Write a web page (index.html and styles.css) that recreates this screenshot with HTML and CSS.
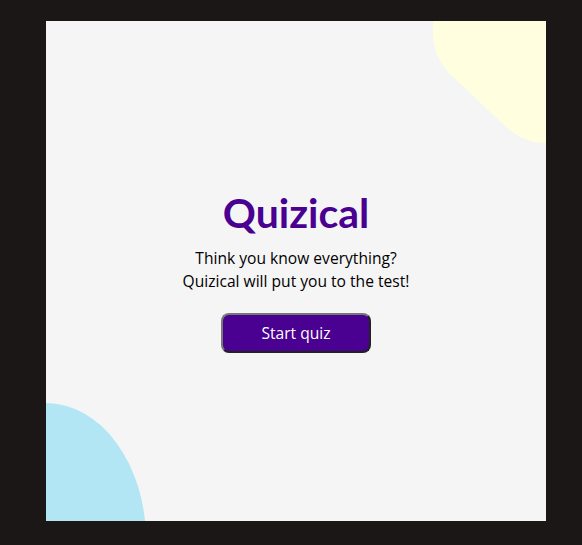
FILE: index.html
```html
<!DOCTYPE html>
<html lang="en">
<head>
<meta charset="utf-8">
<title>Quizical</title>
<link rel="stylesheet" href="styles.css">
</head>
<body>
<main class="card">
  <svg class="blob blob-yellow" width="500" height="500" viewBox="0 0 500 500" aria-hidden="true">
    <path d="M387 -10 L387 14 C387 30 395 44 405 54 L458 104 C470 115 482 122 500 122 L510 122 L510 -10 Z" fill="#fffedf"/>
  </svg>
  <svg class="blob blob-blue" width="500" height="500" viewBox="0 0 500 500" aria-hidden="true">
    <ellipse cx="0" cy="519" rx="100" ry="137" fill="#b2e6f5"/>
  </svg>
  <section class="intro">
    <h1 class="title">Quizical</h1>
    <p class="tagline">Think you know everything?<br>Quizical will put you to the test!</p>
    <button class="start-btn" type="button">Start quiz</button>
  </section>
</main>
</body>
</html>
```
FILE: styles.css
```css
html, body {
  margin: 0;
  padding: 0;
}
body {
  background: #1b1716;
  height: 545px;
  overflow: hidden;
  font-family: "Open Sans", "Noto Sans", sans-serif;
}
.card {
  position: relative;
  margin: 21px 0 0 46px;
  width: 500px;
  height: 500px;
  background: #f5f5f5;
  overflow: hidden;
  display: flex;
  align-items: center;
  justify-content: center;
}
.blob {
  position: absolute;
  left: 0;
  top: 0;
}
.intro {
  position: relative;
  display: flex;
  flex-direction: column;
  align-items: center;
  text-align: center;
  margin-top: 0;
}
.title {
  margin: 0;
  font-family: Lato, "Open Sans", sans-serif;
  font-size: 41px;
  font-weight: 700;
  color: #4a0091;
  line-height: 48px;
}
.tagline {
  margin: 10px 0 0;
  font-size: 15.6px;
  line-height: 23px;
  color: #000;
}
.start-btn {
  margin-top: 20px;
  width: 150px;
  height: 40px;
  border-radius: 8px;
  border: 2px outset #777;
  background: #4a0091;
  color: #fff;
  font-family: inherit;
  font-size: 15.6px;
}
```
